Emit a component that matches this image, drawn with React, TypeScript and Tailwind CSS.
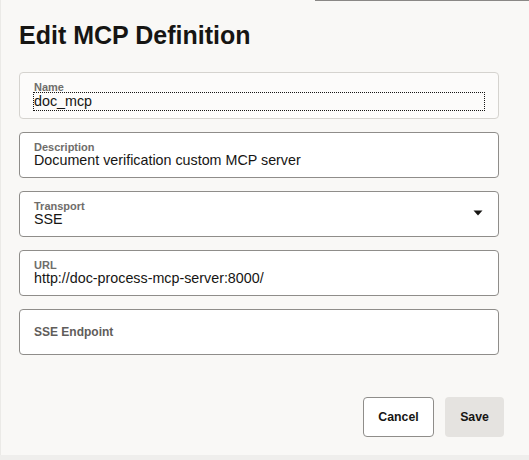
export default function App() {
  return (
    <div className="h-[460px] w-[529px] overflow-hidden bg-[#efeeec] font-['Liberation_Sans',Arial,sans-serif] text-[#161513]">
      <div className="relative h-[455px] border-l border-[#ebeae7] bg-[#f9f8f6]">
        <div className="absolute right-0 top-0 h-px w-[214px] bg-[#8a8886]" />

        <h1 className="pl-[18px] pt-[20px] text-[25px] font-bold leading-[30px]">
          Edit MCP Definition
        </h1>

        <div className="ml-[18px] mt-[22px] flex w-[480px] flex-col gap-[13px]">
          <div className="h-[47px] rounded-[4px] border border-[#d5d3cf] bg-[#fcfbfa] px-[14px] pt-[9px]">
            <div className="text-[11px] font-bold leading-[11px] text-[#6f6d6a]">Name</div>
            <div className="text-[14.3px] leading-[17px] outline-1 outline-dotted outline-[#161513]">
              doc_mcp
            </div>
          </div>

          <div className="h-[46px] rounded-[4px] border border-[#8f8d8a] bg-white px-[14px] pt-[9px]">
            <div className="text-[11px] font-bold leading-[10px] text-[#6f6d6a]">Description</div>
            <div className="text-[14.3px] leading-[17px]">Document verification custom MCP server</div>
          </div>

          <div className="flex h-[46px] items-center rounded-[4px] border border-[#8f8d8a] bg-white pl-[14px] pr-[14px]">
            <div className="flex-1 self-start pt-[9px]">
              <div className="text-[11px] font-bold leading-[10px] text-[#6f6d6a]">Transport</div>
              <div className="text-[14.3px] leading-[17px]">SSE</div>
            </div>
            <svg width="10" height="6" viewBox="0 0 10 6" className="mr-[1px] mt-[-2px]">
              <path d="M0.5 0.5h9L5 5.5z" fill="#161513" />
            </svg>
          </div>

          <div className="h-[46px] rounded-[4px] border border-[#8f8d8a] bg-white px-[14px] pt-[9px]">
            <div className="text-[11px] font-bold leading-[10px] text-[#6f6d6a]">URL</div>
            <div className="text-[14.3px] leading-[17px]">http://doc-process-mcp-server:8000/</div>
          </div>

          <div className="flex h-[46px] items-center rounded-[4px] border border-[#8f8d8a] bg-white px-[14px]">
            <span className="text-[12px] font-bold text-[#5f5d5a]">SSE Endpoint</span>
          </div>
        </div>

        <div className="mr-[25px] mt-[42px] flex justify-end gap-[11px]">
          <button className="h-[40px] w-[71px] rounded-[4px] border border-[#8f8d8a] bg-white text-[12.3px] font-bold">
            Cancel
          </button>
          <button className="h-[40px] w-[59px] rounded-[4px] bg-[#e5e3e0] text-[12.3px] font-bold">
            Save
          </button>
        </div>
      </div>
    </div>
  );
}
